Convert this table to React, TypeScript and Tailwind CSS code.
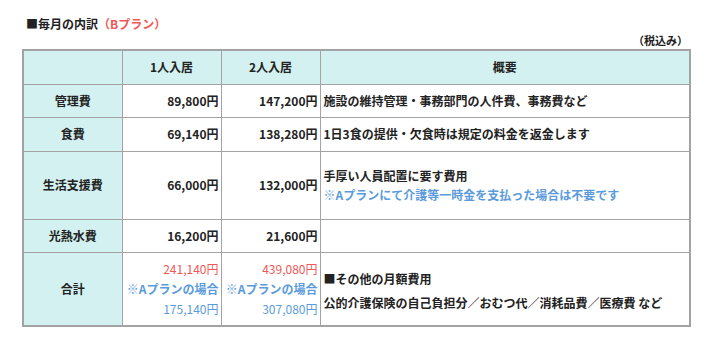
const font = { fontFamily: '"Noto Sans CJK JP", "Liberation Sans", sans-serif' };

type Row = {
  label: string;
  single: string;
  double: string;
  height: string;
  note: React.ReactNode;
};

const rows: Row[] = [
  {
    label: '管理費',
    single: '89,800円',
    double: '147,200円',
    height: 'h-[33px]',
    note: '施設の維持管理・事務部門の人件費、事務費など',
  },
  {
    label: '食費',
    single: '69,140円',
    double: '138,280円',
    height: 'h-[34px]',
    note: '1日3食の提供・欠食時は規定の料金を返金します',
  },
  {
    label: '生活支援費',
    single: '66,000円',
    double: '132,000円',
    height: 'h-[68px]',
    note: (
      <div className="leading-[19px]">
        <div>手厚い人員配置に要す費用</div>
        <div className="text-[#5b9bdc]">※Aプランにて介護等一時金を支払った場合は不要です</div>
      </div>
    ),
  },
  {
    label: '光熱水費',
    single: '16,200円',
    double: '21,600円',
    height: 'h-[33px]',
    note: '',
  },
];

const cell = 'border border-[#a3a3a3] text-[12px] font-bold text-[#222]';

export default function App() {
  return (
    <div className="w-[720px] h-[347px] bg-white pt-[17px]" style={font}>
      <div className="pl-[26px] text-[12px] font-bold text-[#222] leading-[14px]">
        ■毎月の内訳<span className="text-[#f25757]">（Bプラン）</span>
      </div>
      <div className="w-[691px] text-right text-[11px] font-bold text-[#222] leading-[14px] mt-[2px] pr-[3px]">
        （税込み）
      </div>
      <table className="ml-[22px] mt-[2px] w-[669px] table-fixed border-collapse border-2 border-[#a3a3a3]">
        <colgroup>
          <col className="w-[99px]" />
          <col className="w-[99px]" />
          <col className="w-[99px]" />
          <col />
        </colgroup>
        <thead>
          <tr className="h-[34px] bg-[#d3f1f0]">
            <th className={cell}></th>
            <th className={cell}>1人入居</th>
            <th className={cell}>2人入居</th>
            <th className={cell}>概要</th>
          </tr>
        </thead>
        <tbody>
          {rows.map((r) => (
            <tr key={r.label} className={r.height}>
              <td className={`${cell} bg-[#d3f1f0] text-center`}>{r.label}</td>
              <td className={`${cell} text-right pr-[2px]`}>{r.single}</td>
              <td className={`${cell} text-right pr-[2px]`}>{r.double}</td>
              <td className={`${cell} pl-[3px]`}>{r.note}</td>
            </tr>
          ))}
          <tr className="h-[74px]">
            <td className={`${cell} bg-[#d3f1f0] text-center`}>合計</td>
            <td className={`${cell} text-right pr-[2px] leading-[20px]`}>
              <div className="text-[#f25757] font-normal">241,140円</div>
              <div className="text-[#5b9bdc]">※Aプランの場合</div>
              <div className="text-[#5b9bdc] font-normal">175,140円</div>
            </td>
            <td className={`${cell} text-right pr-[2px] leading-[20px]`}>
              <div className="text-[#f25757] font-normal">439,080円</div>
              <div className="text-[#5b9bdc]">※Aプランの場合</div>
              <div className="text-[#5b9bdc] font-normal">307,080円</div>
            </td>
            <td className={`${cell} pl-[3px] pt-[4px] leading-[24px]`}>
              <div>■その他の月額費用</div>
              <div>公的介護保険の自己負担分／おむつ代／消耗品費／医療費 など</div>
            </td>
          </tr>
        </tbody>
      </table>
    </div>
  );
}
